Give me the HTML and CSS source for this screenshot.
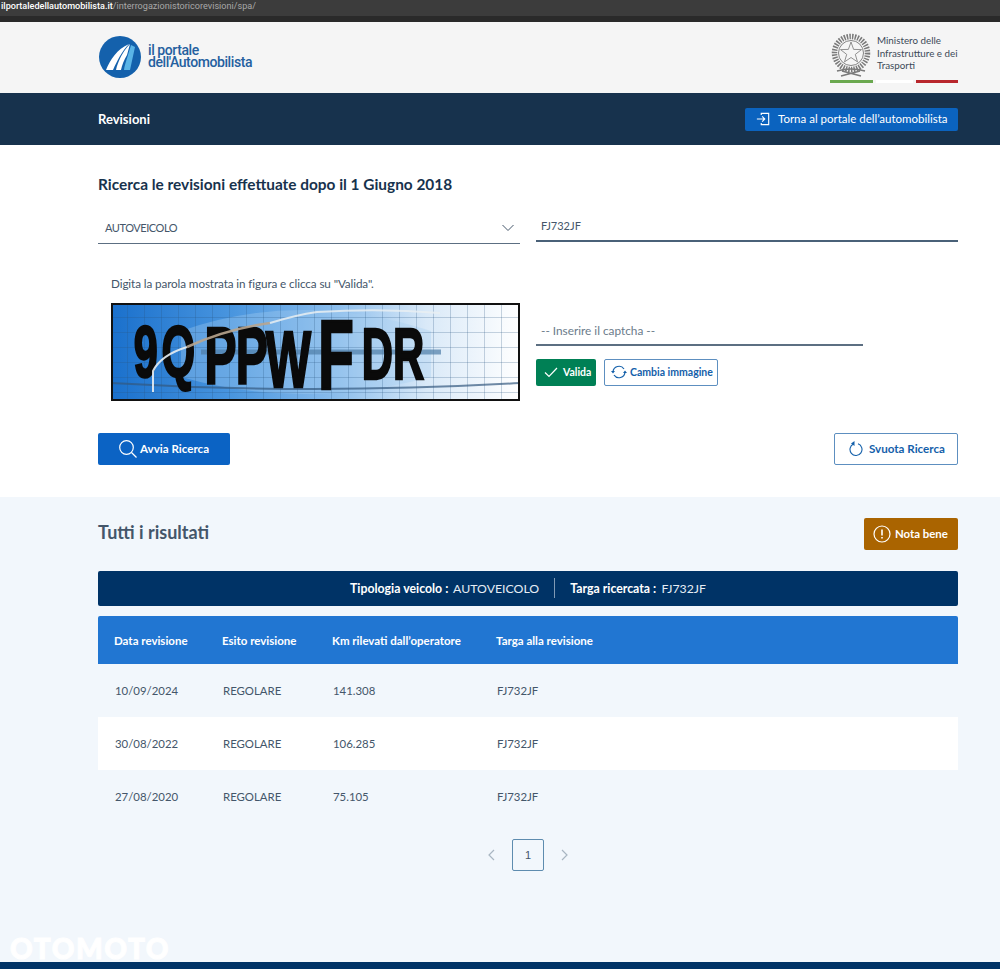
FILE: index.html
```html
<!DOCTYPE html>
<html lang="it">
<head>
<meta charset="utf-8">
<title>Revisioni</title>
<link rel="stylesheet" href="styles.css">
</head>
<body>
<div class="urlbar"><span class="url"><b>ilportaledellautomobilista.it</b>/interrogazionistoricorevisioni/spa/</span></div>
<div class="urlshade"></div>
<header class="brand">
  <div class="logo">
    <svg class="logo-mark" width="42" height="42" viewBox="1 0 42 42">
      <circle cx="22" cy="21" r="21" fill="#1461ac"/>
      <path d="M8 34 C12 24 19 13 31 8 C24 15 19 25 15 34 Z" fill="#fff"/>
      <path d="M18 34 C20 25 25 15 32 8 L29 19 C26 24 24 29 23 34 Z" fill="#fff"/>
      <path d="M26 34 C27 27 30 20 33 9 L37 11 L32 34 Z" fill="#5ab4e6"/>
    </svg>
    <div class="logo-text"><span>il portale</span><span>dell'Automobilista</span></div>
  </div>
  <div class="ministry">
    <div class="ministry-top">
      <svg width="42" height="46" viewBox="0 0 42 46" fill="none" stroke="#7a7a7a">
        <circle cx="21" cy="21" r="16.500" stroke-width="5.500" stroke-dasharray="1.500 1.200"/>
        <circle cx="21" cy="21" r="12.500" stroke-width=".8" stroke="#666"/>
        <path d="M21 10 L23.600 17.400 L31.500 17.600 L25.300 22.400 L27.500 29.900 L21 25.500 L14.500 29.900 L16.700 22.400 L10.500 17.600 L18.400 17.400 Z" stroke-width=".8" stroke="#777" fill="#f5f5f5"/>
        <path d="M7 39 Q21 35 35 39 M11 44 L30 39 M31 44 L12 39" stroke-width="1.500"/>
      </svg>
      <div class="ministry-text">Ministero delle<br>Infrastrutture e dei<br>Trasporti</div>
    </div>
    <div class="tricolor"><i class="green"></i><i class="white"></i><i class="red"></i></div>
  </div>
</header>
<nav class="navbar">
  <strong class="nav-title">Revisioni</strong>
  <a class="btn-portal">
    <svg width="14" height="14" viewBox="0 0 16 16" fill="none" stroke="#fff" stroke-width="1.300"><path d="M6 3.500 V1.500 H14.500 V14.500 H6 V12.500"/><path d="M1 8 H10 M7 5 L10 8 L7 11"/></svg>
    Torna al portale dell’automobilista
  </a>
</nav>
<main>
  <section class="search">
    <h1 class="search-title">Ricerca le revisioni effettuate dopo il 1 Giugno 2018</h1>
    <div class="two-col fields">
      <div class="select"><span>AUTOVEICOLO</span>
        <svg width="12" height="8" viewBox="0 0 12 8" fill="none" stroke="#44566a" stroke-width="1"><path d="M.5 1 L6 6.500 L11.500 1"/></svg>
      </div>
      <div class="plate">FJ732JF</div>
    </div>
    <div class="two-col captcha-row">
      <div class="captcha-left">
        <p class="captcha-hint">Digita la parola mostrata in figura e clicca su "Valida".</p>
        <svg class="captcha" width="409" height="98" viewBox="0 0 409 98">
          <defs>
            <linearGradient id="cg" x1="0" x2="1" y1="0" y2="0">
              <stop offset="0" stop-color="#1a70cc"/><stop offset=".3" stop-color="#4a96df"/>
              <stop offset=".55" stop-color="#8bbdec"/><stop offset=".77" stop-color="#d9e9f8"/><stop offset="1" stop-color="#fff"/>
            </linearGradient>
            <pattern id="grid" width="17" height="15" patternUnits="userSpaceOnUse">
              <path d="M17 0 V15 M0 15 H17" fill="none" stroke="#27527f" stroke-opacity=".5" stroke-width="1"/>
            </pattern>
          </defs>
          <rect width="409" height="98" fill="url(#cg)"/>
          <path d="M70 28 Q190 -14 320 28 V74 Q190 108 70 74 Z" fill="#a6cdf1" fill-opacity=".35"/>
          <rect width="409" height="98" fill="url(#grid)"/>
          <path d="M90 49 H330" stroke="#4f7ea8" stroke-width="5" opacity=".7"/>
          <path d="M0 80 Q200 92 409 80" stroke="#33597f" stroke-width="2" fill="none" opacity=".7"/>
          <text class="captcha-text" transform="scale(.6 1)"><tspan class="cap-a" x="38 84" y="74 74">9Q</tspan><tspan class="cap-b" x="156 208 258" y="80 80 84">PPW</tspan><tspan class="cap-c" x="345" y="86">F</tspan><tspan class="cap-a" x="418 470" y="76 76">DR</tspan></text>
          <path d="M42 89 V68 Q50 52 76 44" stroke="#e9eef2" stroke-width="2" fill="none" opacity=".9"/>
          <path d="M76 44 Q115 26 159 20" stroke="#b8a58f" stroke-width="2.500" fill="none" opacity=".9"/>
          <path d="M159 20 Q185 12 206 9 Q270 5 329 10" stroke="#e9eef2" stroke-width="2" fill="none" opacity=".85"/>
        </svg>
      </div>
      <div class="captcha-right">
        <div class="captcha-input">-- Inserire il captcha --</div>
        <div class="captcha-actions">
          <a class="btn btn-valid">
            <svg width="14" height="11" viewBox="0 0 14 11" fill="none" stroke="#fff" stroke-width="1.200"><path d="M1 5.500 L5 9.500 L13 1"/></svg>
            Valida
          </a>
          <a class="btn btn-change">
            <svg width="16" height="14" viewBox="0 0 16 14" fill="none" stroke="#1460aa" stroke-width="1.200"><path d="M2 7 A6 6 0 0 1 13 4"/><path d="M14 7 A6 6 0 0 1 3 10"/><path d="M0 6 H4 L2 8.500 Z M12 8 H16 L14 5.500 Z" fill="#1460aa" stroke="none"/></svg>
            Cambia immagine
          </a>
        </div>
      </div>
    </div>
    <div class="search-actions">
      <a class="btn btn-search">
        <svg width="18" height="18" viewBox="0 0 18 18" fill="none" stroke="#fff" stroke-width="1.200"><circle cx="7.500" cy="7.500" r="6.800"/><path d="M12.500 12.500 L17.500 17.500"/></svg>
        Avvia Ricerca
      </a>
      <a class="btn btn-clear">
        <svg width="14" height="15" viewBox="0 0 14 15" fill="none" stroke="#1460aa" stroke-width="1.100"><path d="M4.500 3 A6 6 0 1 0 9 2.800"/><path d="M5.500 0 V5 L2 2.500 Z" fill="#1460aa" stroke="none"/></svg>
        Svuota Ricerca
      </a>
    </div>
  </section>
  <section class="results">
    <div class="results-head">
      <h2 class="results-title">Tutti i risultati</h2>
      <a class="btn btn-note">
        <svg width="18" height="18" viewBox="0 0 18 18" fill="none" stroke="#fff" stroke-width="1.200"><circle cx="9" cy="9" r="8"/><path d="M9 4.500 V10.500 M9 12 V13.500" stroke-width="1.600"/></svg>
        Nota bene
      </a>
    </div>
    <div class="summary">
      <span class="summary-item"><b>Tipologia veicolo :</b> AUTOVEICOLO</span>
      <span class="summary-sep"></span>
      <span class="summary-item"><b>Targa ricercata :</b> FJ732JF</span>
    </div>
    <div class="table">
      <div class="row head"><span>Data revisione</span><span>Esito revisione</span><span>Km rilevati dall’operatore</span><span>Targa alla revisione</span></div>
      <div class="row"><span>10/09/2024</span><span>REGOLARE</span><span>141.308</span><span>FJ732JF</span></div>
      <div class="row alt"><span>30/08/2022</span><span>REGOLARE</span><span>106.285</span><span>FJ732JF</span></div>
      <div class="row"><span>27/08/2020</span><span>REGOLARE</span><span>75.105</span><span>FJ732JF</span></div>
    </div>
    <div class="pager">
      <svg width="8" height="12" viewBox="0 0 8 12" fill="none" stroke="#a9b6c2" stroke-width="1.200"><path d="M7 1 L2 6 L7 11"/></svg>
      <span class="page">1</span>
      <svg width="8" height="12" viewBox="0 0 8 12" fill="none" stroke="#a9b6c2" stroke-width="1.200"><path d="M1 1 L6 6 L1 11"/></svg>
    </div>
  </section>
</main>
<footer class="foot"></footer>
<div class="watermark">OTOMOTO</div>
</body>
</html>
```
FILE: styles.css
```css
* { box-sizing: border-box; }
html, body { margin: 0; padding: 0; }
body { position: relative; width: 1000px; height: 969px; overflow: hidden; font-family: "Lato", "Liberation Sans", sans-serif; color: #17324d; background: #fff; }
svg { display: block; flex: none; }

.urlbar { height: 16px; background: #3c3c3c; padding-left: 1px; overflow: hidden; }
.url { font: 400 9.100px/13px "Roboto", sans-serif; color: #a8a8a8; white-space: nowrap; display: block; }
.url b { font-weight: 500; color: #fff; }
.urlshade { height: 6px; background: #2a2a2a; }

.brand { height: 71px; background: #f5f5f5; display: flex; justify-content: space-between; padding: 14px 42px 0 99px; }
.logo { display: flex; align-items: flex-start; gap: 7px; height: 44px; }
.logo-text { display: flex; flex-direction: column; margin-top: 9px; font: 500 14px/11.500px "Roboto", sans-serif; letter-spacing: -.42px; color: #24609f; }
.ministry { width: 128px; display: flex; flex-direction: column; margin-top: -4px; }
.ministry-top { display: flex; gap: 5px; height: 48px; }
.ministry-text { font: 400 9.800px/12.500px "Lato", sans-serif; color: #3c4a58; padding-top: 2px; white-space: nowrap; }
.tricolor { display: flex; justify-content: space-between; height: 3px; margin-top: 0; }
.tricolor i { display: block; }
.tricolor .green { width: 43px; background: #6aa84f; }
.tricolor .white { width: 37px; background: #fff; }
.tricolor .red { width: 42px; background: #b8262c; }

.navbar { height: 52px; background: #17324d; display: flex; align-items: center; justify-content: space-between; padding: 0 42px 0 98px; }
.nav-title { color: #fff; font-size: 13px; font-weight: 700; }
.btn-portal { width: 213px; height: 23px; background: #0b63bf; border-radius: 2px; color: #fff; display: flex; align-items: center; gap: 8px; padding: 0 0 1px 11px; font-size: 11.500px; white-space: nowrap; }

.search { height: 352px; padding: 30px 42px 0 98px; }
.search-title { margin: 0; font-size: 15.400px; line-height: 19px; font-weight: 700; color: #17324d; }
.two-col { display: grid; grid-template-columns: 422px 422px; gap: 16px; }
.fields { margin-top: 16px; }
.select { height: 34px; border-bottom: 1px solid #5c6f82; display: flex; align-items: center; justify-content: space-between; padding: 2px 6px 0 7px; font-size: 11px; letter-spacing: -.45px; color: #44566a; }
.plate { height: 32px; border-bottom: 2px solid #4a6178; padding: 0 5px; display: flex; align-items: center; font-size: 11px; color: #44566a; }

.captcha-row { margin-top: 29px; }
.captcha-left { padding-left: 13px; }
.captcha-hint { margin: 0 0 9px; font-size: 11.700px; line-height: 21px; color: #44566a; letter-spacing: -.1px; }
.captcha { outline: 2px solid #111; outline-offset: -2px; }
.captcha-text { font-family: "Liberation Sans", sans-serif; font-weight: 700; fill: #0a0a0a; stroke: #0a0a0a; stroke-width: 2.500px; }
.cap-a { font-size: 72px; }
.cap-b { font-size: 80px; }
.cap-c { font-size: 98px; }
.captcha-right { padding-top: 43px; }
.captcha-input { width: 327px; height: 30px; border-bottom: 2px solid #5c6f82; font-size: 11.800px; color: #6b7b8a; padding: 7px 5px 0; }
.captcha-actions { display: flex; gap: 8px; margin-top: 13px; }

.btn { display: flex; align-items: center; border-radius: 2px; font-weight: 700; white-space: nowrap; padding-bottom: 1px; }
.btn-valid { width: 60px; height: 27px; background: #008055; color: #fff; font-size: 10.500px; padding-left: 8px; gap: 5px; }
.btn-change { width: 114px; height: 27px; background: #fff; border: 1px solid #5d8fc0; color: #1460aa; font-size: 10.500px; padding-left: 6px; gap: 3px; }
.search-actions { display: flex; justify-content: space-between; margin-top: 32px; }
.btn-search { width: 132px; height: 32px; background: #0b63c4; color: #fff; font-size: 11.600px; padding-left: 21px; gap: 3px; }
.btn-clear { width: 124px; height: 32px; background: #fff; border: 1px solid #5d8fc0; color: #1460aa; font-size: 11.600px; padding-left: 14px; gap: 6px; }

.results { height: 465px; background: #f2f7fc; padding: 21px 42px 0 98px; }
.results-head { display: flex; justify-content: space-between; height: 32px; }
.results-title { margin: 0; font-size: 18px; line-height: 28px; font-weight: 700; color: #44566a; }
.btn-note { width: 94px; height: 32px; background: #aa6400; color: #fff; font-size: 11.400px; padding-left: 9px; gap: 4px; }
.summary { margin-top: 21px; height: 35px; background: #003366; border-radius: 2px; display: flex; align-items: center; justify-content: center; gap: 15px; padding-bottom: 1px; color: #e6edf5; font-size: 12.300px; }
.summary-item b { color: #fff; font-weight: 700; margin-right: 2px; }
.summary-sep { width: 1px; height: 20px; background: #7f9ab5; }

.table { margin-top: 10px; }
.row { display: grid; grid-template-columns: 108px 110px 164px 1fr; height: 53px; align-items: center; padding-left: 17px; font-size: 11.400px; color: #44566a; }
.row.alt { background: #fff; }
.row.head { height: 48px; background: #2176d2; border-radius: 2px 2px 0 0; color: #fff; font-weight: 700; font-size: 11.500px; padding-left: 16px; }

.pager { display: flex; justify-content: center; align-items: center; gap: 17px; margin-top: 16px; }
.page { width: 32px; height: 32px; border: 1px solid #5e8caf; border-radius: 2px; display: flex; align-items: center; justify-content: center; font-family: "Liberation Sans", sans-serif; font-size: 11px; color: #44566a; }

.foot { height: 7px; background: #003366; }
.watermark { position: absolute; left: 10px; top: 931px; font: 900 28px/34px "Lato", sans-serif; letter-spacing: 1.600px; color: #fff; -webkit-text-stroke: 1px #fff; }
```
